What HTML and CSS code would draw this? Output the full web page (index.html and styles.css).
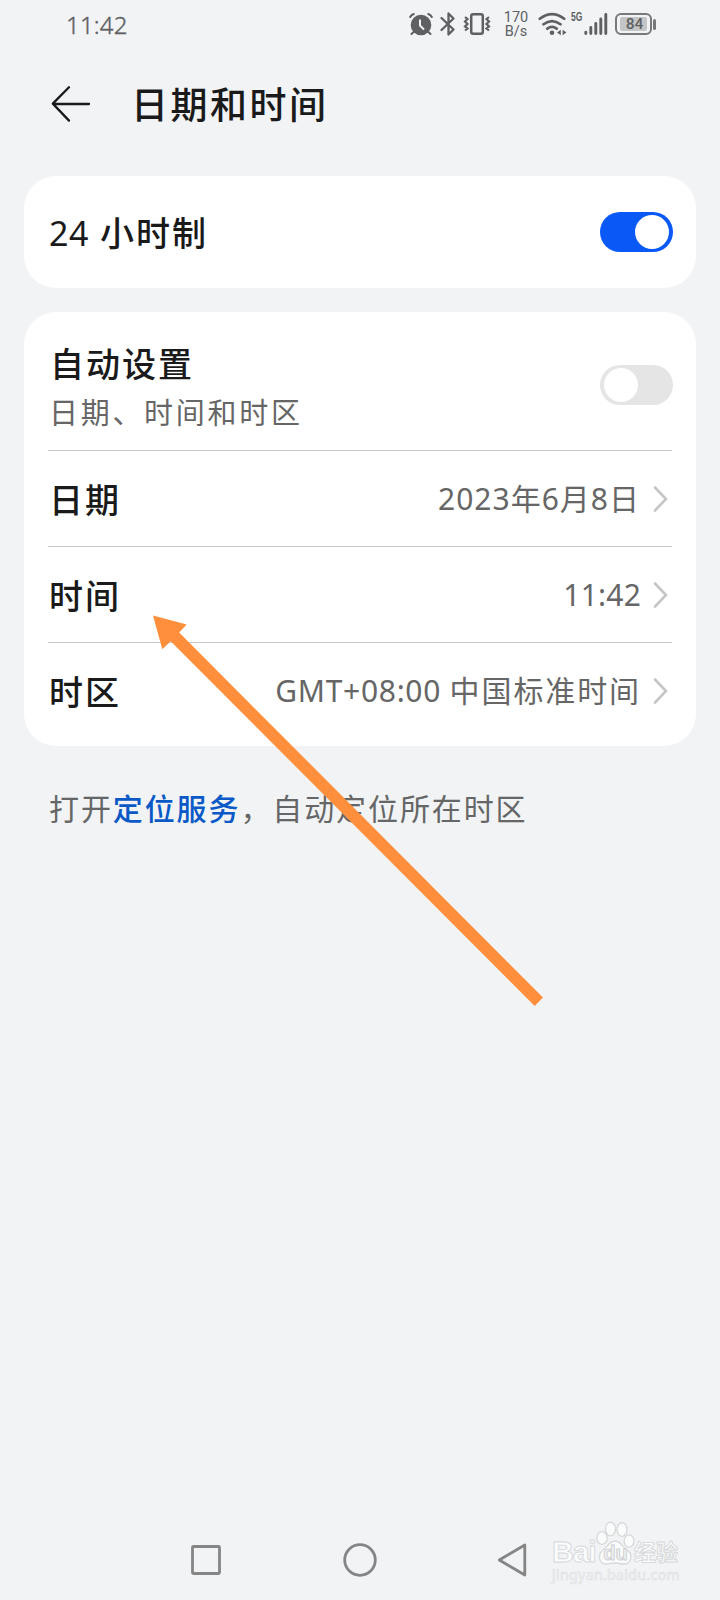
FILE: index.html
```html
<!DOCTYPE html>
<html lang="zh-CN">
<head>
    <meta charset="UTF-8">
    <meta name="viewport" content="width=device-width, initial-scale=1.0">
    <title>日期和时间</title>
    <link rel="stylesheet" href="styles.css">
</head>
<body>
    <div class="screen">
        <div class="statusbar">
            <span class="clock">11:42</span>
            <div class="status-icons">
                <!-- alarm -->
                <svg class="alarm" width="24" height="28" viewBox="0 0 24 28">
                    <circle cx="12" cy="15" r="10.3" fill="#5f6062"/>
                    <path d="M1.2 7 Q2.3 4.8 4.8 4 M22.8 7 Q21.7 4.8 19.2 4" fill="none" stroke="#5f6062" stroke-width="2" stroke-linecap="round"/>
                    <path d="M4.5 22 L2.5 24 M19.5 22 L21.5 24" stroke="#5f6062" stroke-width="2" stroke-linecap="round"/>
                    <path d="M11 9.5 V15.5 L15 19.5" fill="none" stroke="#f1f3f5" stroke-width="2"/>
                </svg>
                <!-- bluetooth -->
                <svg class="bluetooth" width="16" height="28" viewBox="0 0 16 28">
                    <path d="M1.5 8 L13.5 19.5 L8.5 24.5 V3.5 L13.5 8.5 L1.5 20" fill="none" stroke="#5f6062" stroke-width="2.3" stroke-linejoin="round" stroke-linecap="round"/>
                </svg>
                <!-- vibrate -->
                <svg class="vibrate" width="28" height="28" viewBox="0 0 28 28">
                    <rect x="8.2" y="4.2" width="11.6" height="19.6" rx="2" fill="none" stroke="#5f6062" stroke-width="2.5"/>
                    <path d="M2 7 L4.5 9 L2 11.5 L4.5 14 L2 16.5 L4.5 18.5 L2 20.5 M26 7 L23.5 9 L26 11.5 L23.5 14 L26 16.5 L23.5 18.5 L26 20.5" fill="none" stroke="#5f6062" stroke-width="2.2"/>
                </svg>
                <div class="speed"><span>170</span><span>B/s</span></div>
                <!-- wifi -->
                <svg class="wifi" width="30" height="28" viewBox="0 0 30 28">
                    <path d="M1.8 8.8 Q14 -0.5 26.2 8.8 M5.5 14.3 Q14 7.8 22.5 14.3 M9.3 18.7 Q14 15.2 18.7 18.7" fill="none" stroke="#5f6062" stroke-width="2.7" stroke-linecap="round"/>
                    <circle cx="14" cy="22.8" r="2.3" fill="#5f6062"/>
                    <path d="M22.8 19.8 V25.2 L19 22.5 Z M24.6 19.8 V25.2 L28.4 22.5 Z" fill="#5f6062"/>
                </svg>
                <div class="net"><span>5G</span></div>
                <!-- signal -->
                <svg class="signal" width="24" height="28" viewBox="0 0 24 28">
                    <path d="M1.8 22.3 V23.5 M6.8 17.5 V23.5 M11.8 13.5 V23.5 M16.8 9 V23.5 M21.8 4.5 V23.5" stroke="#5f6062" stroke-width="2.9" stroke-linecap="round"/>
                </svg>
                <div class="battery"><span>84</span></div>
                <div class="battery-tip"></div>
            </div>
        </div>

        <div class="header">
            <svg width="40" height="40" viewBox="0 0 40 40">
                <path d="M38 20 H2 M18 3.3 L1.8 19.6 L18 36.6" fill="none" stroke="#1a1a1a" stroke-width="2.3" stroke-linecap="round" stroke-linejoin="round"/>
            </svg>
            <h1>日期和时间</h1>
        </div>

        <div class="card single">
            <span class="label"><span class="num">24</span> 小时制</span>
            <div class="toggle on"><div class="knob"></div></div>
        </div>

        <div class="card list">
            <div class="row auto">
                <div class="texts">
                    <span class="label">自动设置</span>
                    <span class="sub">日期、时间和时区</span>
                </div>
                <div class="toggle"><div class="knob"></div></div>
            </div>
            <div class="row">
                <span class="label">日期</span>
                <span class="value date">2023年6月8日</span>
                <svg class="chevron" width="16" height="28" viewBox="0 0 16 28"><path d="M2 2.5 L13 14 L2 25.5" /></svg>
            </div>
            <div class="row">
                <span class="label">时间</span>
                <span class="value time">11:42</span>
                <svg class="chevron" width="16" height="28" viewBox="0 0 16 28"><path d="M2 2.5 L13 14 L2 25.5" /></svg>
            </div>
            <div class="row">
                <span class="label">时区</span>
                <span class="value zone">GMT+08:00 <span class="cjk">中国标准时间</span></span>
                <svg class="chevron" width="16" height="28" viewBox="0 0 16 28"><path d="M2 2.5 L13 14 L2 25.5" /></svg>
            </div>
        </div>

        <p class="hint">打开<a href="#location">定位服务</a>，自动定位所在时区</p>

        <div class="navbar">
            <svg width="36" height="36" viewBox="0 0 36 36"><rect x="4.5" y="4.5" width="27" height="27" rx="1"/></svg>
            <svg width="36" height="36" viewBox="0 0 36 36"><circle cx="18" cy="18" r="15.3"/></svg>
            <svg width="36" height="36" viewBox="0 0 36 36"><path d="M3.3 18 L28.8 3 V33 Z"/></svg>
        </div>

        <!-- arrow pointing at the time row -->
        <svg class="arrow" width="396" height="396" viewBox="150 613 396 396">
            <path d="M153 615.5 L186.7 624.5 L179.2 632.6 L543 997.5 L534.7 1006 L170.7 641.3 L162.3 649.3 Z" fill="#ff8f3c"/>
        </svg>

        <div class="watermark">
            <div class="brand">
                <span class="bai">Bai</span>
                <svg width="40" height="44" viewBox="0 0 40 44">
                    <ellipse cx="7" cy="17" rx="5.2" ry="6.4"/>
                    <ellipse cx="15.5" cy="8" rx="5" ry="6.8"/>
                    <ellipse cx="27" cy="8.5" rx="5" ry="6.8"/>
                    <ellipse cx="34" cy="20" rx="4.9" ry="6.2"/>
                    <path d="M20 20 C26 20 27 26 32 29 C39 34 36 43 29 43 C25 43 24 42 20 42 C16 42 14 43 11 43 C4 43 2 34 8 29 C13 26 14 20 20 20 Z"/>
                    <text x="20.5" y="38.5" text-anchor="middle">du</text>
                </svg>
                <span class="jy">经验</span>
            </div>
            <div class="url">jingyan.baidu.com</div>
        </div>
    </div>
</body>
</html>
```
FILE: styles.css
```css
body {
    margin: 0;
    background-color: #f1f3f5;
    font-family: "Noto Sans", "Noto Sans CJK SC", sans-serif;
    color: #1a1a1a;
}

.screen {
    position: relative;
    display: flex;
    flex-direction: column;
    width: 720px;
    height: 1600px;
    overflow: hidden;
}

.statusbar {
    display: flex;
    align-items: center;
    justify-content: space-between;
    height: 48px;
    padding: 0 64px 0 66px;
    color: #5f6062;
}

.clock {
    padding-top: 2px;
    font-size: 24px;
    font-weight: 300;
    letter-spacing: 0.2px;
    line-height: 46px;
    -webkit-text-stroke: 0.4px #5f6062;
}

.status-icons {
    display: flex;
    align-items: center;
}

.bluetooth {
    margin-left: 7px;
}

.vibrate {
    margin-left: 7px;
}

.speed {
    display: flex;
    flex-direction: column;
    align-items: center;
    width: 26px;
    margin-left: 12px;
    padding-top: 1px;
    font-family: Roboto, sans-serif;
    font-size: 14.5px;
    line-height: 14px;
}

.wifi {
    margin-left: 9px;
}

.net {
    width: 12px;
    height: 28px;
    margin-left: 3px;
}

.net span {
    display: block;
    font-family: "Liberation Sans", sans-serif;
    font-size: 12.5px;
    font-weight: 700;
    line-height: 14px;
    transform: scaleX(0.68);
    transform-origin: left;
}

.signal {
    margin-left: 1px;
}

.battery {
    display: flex;
    align-items: center;
    box-sizing: border-box;
    width: 37px;
    height: 22px;
    margin-left: 7px;
    padding: 0 3px;
    border: 2px solid #77787a;
    border-radius: 6px;
}

.battery span {
    width: 25px;
    padding-left: 2px;
    background-color: #c4c5c6;
    border-radius: 2px;
    font-family: Roboto, sans-serif;
    font-size: 15.5px;
    font-weight: 500;
    line-height: 14px;
    text-align: center;
}

.battery-tip {
    width: 3px;
    height: 11px;
    margin-left: 1px;
    background-color: #77787a;
    border-radius: 2px;
}

.header {
    display: flex;
    align-items: center;
    height: 112px;
    margin-bottom: 16px;
    padding-left: 51px;
}

.header h1 {
    margin: 2px 0 0 40px;
    font-size: 37px;
    font-weight: 500;
    letter-spacing: 2.5px;
    line-height: 60px;
}

.card {
    margin: 0 24px;
    padding: 0 24px;
    background-color: #fff;
    border-radius: 32px;
}

.single {
    display: flex;
    align-items: center;
    justify-content: space-between;
    height: 112px;
    margin-bottom: 24px;
}

.label {
    padding: 2px 0 0 1px;
    font-size: 34px;
    font-weight: 500;
    letter-spacing: 2px;
    line-height: 46px;
}

.label .num {
    font-weight: 400;
    letter-spacing: 0.6px;
}

.toggle {
    box-sizing: border-box;
    width: 73px;
    height: 40px;
    margin-right: -1px;
    padding: 3px 4px;
    background-color: #e5e5e5;
    border-radius: 20px;
}

.knob {
    width: 34px;
    height: 34px;
    background-color: #fff;
    border-radius: 50%;
}

.toggle.on {
    background-color: #0a59f7;
}

.toggle.on .knob {
    margin-left: auto;
}

.list {
    padding-top: 8px;
    padding-bottom: 8px;
}

.row {
    display: flex;
    align-items: center;
    height: 95px;
    border-bottom: 1px solid #c8c8c8;
}

.row:last-child {
    border-bottom: none;
}

.auto {
    justify-content: space-between;
    height: 130px;
}

.texts {
    display: flex;
    flex-direction: column;
    gap: 4px;
    padding-top: 3px;
}

.texts .label {
    padding-left: 2px;
}

.sub {
    padding-left: 1px;
    font-size: 29px;
    letter-spacing: 2.7px;
    line-height: 44px;
    color: #666;
}

.value {
    margin-left: auto;
    font-size: 30px;
    line-height: 44px;
    color: #666;
}

.date {
    padding-right: 1px;
    letter-spacing: 1px;
}

.time {
    letter-spacing: 0.2px;
}

.zone {
    letter-spacing: 0.7px;
}

.zone .cjk {
    letter-spacing: 1.9px;
}

.chevron {
    margin: 0 3px 0 12px;
}

.chevron path {
    fill: none;
    stroke: #c6c6c6;
    stroke-width: 2.6;
    stroke-linecap: round;
}

.hint {
    margin: 39px 48px 0 49px;
    font-size: 30px;
    letter-spacing: 1.9px;
    line-height: 48px;
    color: #666;
}

.hint a {
    color: #0a59c7;
    font-weight: 500;
    text-decoration: none;
}

.navbar {
    display: flex;
    justify-content: center;
    gap: 118px;
    margin-top: auto;
    padding-bottom: 22px;
}

.navbar svg {
    fill: none;
    stroke: #858585;
    stroke-width: 2.8;
    stroke-linejoin: round;
}

.arrow {
    position: absolute;
    left: 150px;
    top: 613px;
}

.watermark {
    position: absolute;
    left: 552px;
    top: 1521px;
    color: #fbfcfc;
    font-family: "Liberation Sans", "Noto Sans CJK SC", sans-serif;
}

.brand {
    display: flex;
    align-items: flex-end;
    height: 44px;
    -webkit-text-stroke: 0.9px #d6d8da;
}

.brand svg {
    flex-shrink: 0;
    margin-left: 1px;
    fill: #fafbfb;
    stroke: #d6d8da;
    stroke-width: 1.3;
}

.brand text {
    font-size: 20px;
    font-weight: 700;
    fill: #f1f3f5;
    stroke: #cfd1d3;
    stroke-width: 1;
}

.bai {
    width: 42px;
    font-size: 30px;
    font-weight: 700;
    letter-spacing: -1px;
    line-height: 27px;
}

.jy {
    margin-left: -1px;
    font-size: 22px;
    font-weight: 700;
    line-height: 25px;
}

.url {
    font-family: "Noto Sans", sans-serif;
    font-size: 14px;
    letter-spacing: 0.4px;
    line-height: 19px;
    -webkit-text-stroke: 0.6px #dadcde;
}
```
